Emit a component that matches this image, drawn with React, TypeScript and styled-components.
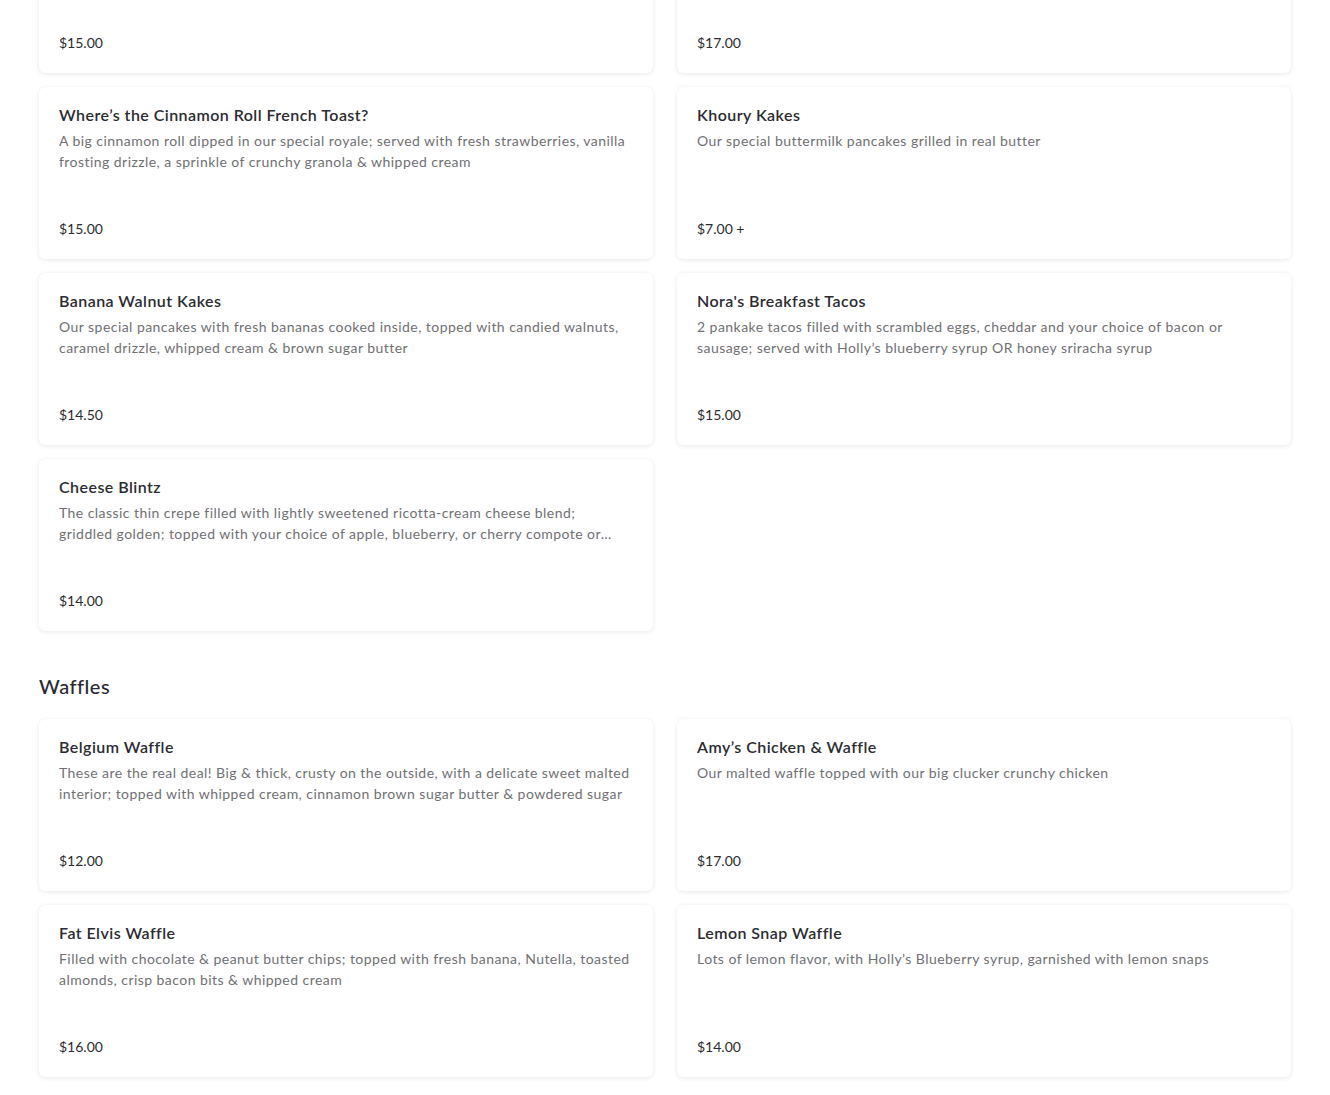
import React from "react";
import styled, { createGlobalStyle } from "styled-components";

const Global = createGlobalStyle`
  html, body { margin: 0; padding: 0; background: #ffffff; }
  body { font-family: "Lato", "Noto Sans", Arial, sans-serif; -webkit-font-smoothing: antialiased; }
  * { box-sizing: border-box; }
`;

const Page = styled.main`
  padding: 0 39px 18px;
  overflow: hidden;
`;

const Section = styled.section`
  display: flex;
  flex-direction: column;
`;

const SectionTitle = styled.h2`
  margin: 41px 0 19px;
  font-size: 20px;
  line-height: 28px;
  font-weight: 500;
  letter-spacing: 0.5px;
  color: #2a2a30;
`;

const Grid = styled.div<{ $offset?: number }>`
  display: grid;
  grid-template-columns: 1fr 1fr;
  column-gap: 24px;
  row-gap: 14px;
  margin-top: ${(p) => (p.$offset ? `-${p.$offset}px` : "0")};
`;

const Card = styled.article`
  height: 172px;
  background: #ffffff;
  border-radius: 6px;
  box-shadow: 0 1px 5px rgba(0, 0, 0, 0.09), 0 0 1px rgba(0, 0, 0, 0.05);
  padding: 18px 23px 20px 20px;
  display: flex;
  flex-direction: column;
`;

const Title = styled.h3`
  margin: 0 0 5px;
  font-size: 16px;
  line-height: 20px;
  font-weight: 600;
  letter-spacing: 0.45px;
  color: #2b2b31;
`;

const Desc = styled.p`
  margin: 0;
  font-size: 14px;
  line-height: 21px;
  letter-spacing: 0.45px;
  color: #707074;
  display: -webkit-box;
  -webkit-line-clamp: 2;
  -webkit-box-orient: vertical;
  overflow: hidden;
`;

const Price = styled.span`
  margin-top: auto;
  font-size: 14px;
  line-height: 20px;
  color: #2b2b31;
`;

type Item = { title?: string; desc?: string; price: string };

const ItemCard = ({ item }: { item: Item }) => (
  <Card>
    {item.title && <Title>{item.title}</Title>}
    {item.desc && <Desc>{item.desc}</Desc>}
    <Price>{item.price}</Price>
  </Card>
);

const topRow: Item[] = [{ price: "$15.00" }, { price: "$17.00" }];

const pancakes: Item[] = [
  {
    title: "Where’s the Cinnamon Roll French Toast?",
    desc: "A big cinnamon roll dipped in our special royale; served with fresh strawberries, vanilla frosting drizzle, a sprinkle of crunchy granola & whipped cream",
    price: "$15.00",
  },
  {
    title: "Khoury Kakes",
    desc: "Our special buttermilk pancakes grilled in real butter",
    price: "$7.00 +",
  },
  {
    title: "Banana Walnut Kakes",
    desc: "Our special pancakes with fresh bananas cooked inside, topped with candied walnuts, caramel drizzle, whipped cream & brown sugar butter",
    price: "$14.50",
  },
  {
    title: "Nora's Breakfast Tacos",
    desc: "2 pankake tacos filled with scrambled eggs, cheddar and your choice of bacon or sausage; served with Holly’s blueberry syrup OR honey sriracha syrup",
    price: "$15.00",
  },
  {
    title: "Cheese Blintz",
    desc: "The classic thin crepe filled with lightly sweetened ricotta-cream cheese blend; griddled golden; topped with your choice of apple, blueberry, or cherry compote or strawberries and whipped cream",
    price: "$14.00",
  },
];

const waffles: Item[] = [
  {
    title: "Belgium Waffle",
    desc: "These are the real deal! Big & thick, crusty on the outside, with a delicate sweet malted interior; topped with whipped cream, cinnamon brown sugar butter & powdered sugar",
    price: "$12.00",
  },
  {
    title: "Amy’s Chicken & Waffle",
    desc: "Our malted waffle topped with our big clucker crunchy chicken",
    price: "$17.00",
  },
  {
    title: "Fat Elvis Waffle",
    desc: "Filled with chocolate & peanut butter chips; topped with fresh banana, Nutella, toasted almonds, crisp bacon bits & whipped cream",
    price: "$16.00",
  },
  {
    title: "Lemon Snap Waffle",
    desc: "Lots of lemon flavor, with Holly’s Blueberry syrup, garnished with lemon snaps",
    price: "$14.00",
  },
];

export default function App() {
  return (
    <>
      <Global />
      <Page>
        <Section>
          <Grid $offset={99}>
            {[...topRow, ...pancakes].map((it, i) => (
              <ItemCard key={i} item={it} />
            ))}
          </Grid>
        </Section>
        <Section>
          <SectionTitle>Waffles</SectionTitle>
          <Grid>
            {waffles.map((it, i) => (
              <ItemCard key={i} item={it} />
            ))}
          </Grid>
        </Section>
      </Page>
    </>
  );
}
